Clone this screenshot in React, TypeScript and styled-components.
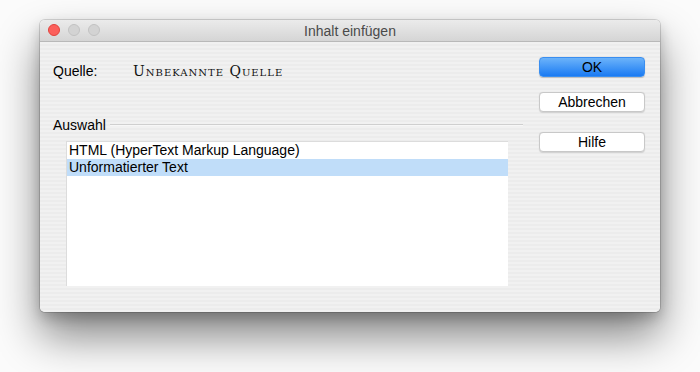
import React from "react";
import styled, { createGlobalStyle } from "styled-components";

const Global = createGlobalStyle`
  html, body { margin: 0; padding: 0; background: #ffffff; }
  body { font-family: "Liberation Sans", Arial, sans-serif; }
  * { box-sizing: border-box; }
`;

const Stage = styled.div`
  width: 700px;
  height: 372px;
  padding: 20px 40px 0 40px;
  background: #fbfbfb;
`;

const Window = styled.div`
  width: 620px;
  height: 292px;
  border-radius: 5px;
  overflow: hidden;
  display: flex;
  flex-direction: column;
  background: repeating-linear-gradient(
    to bottom,
    #ececec 0px,
    #ececec 2px,
    #f1f1f1 2px,
    #f1f1f1 4px
  );
  box-shadow: 0 0 0 1px rgba(0, 0, 0, 0.14), 0 24px 44px rgba(0, 0, 0, 0.48),
    0 6px 14px rgba(0, 0, 0, 0.2);
`;

const TitleBar = styled.div`
  height: 22px;
  flex: none;
  position: relative;
  display: flex;
  align-items: center;
  justify-content: center;
  background: linear-gradient(to bottom, #ebebeb, #d5d5d5);
  border-bottom: 1px solid #b9b9b9;
`;

const Lights = styled.div`
  position: absolute;
  left: 8px;
  top: 4px;
  display: flex;
  gap: 8px;
`;

const Light = styled.span<{ $color: string; $border: string }>`
  width: 12px;
  height: 12px;
  border-radius: 50%;
  background: ${(p) => p.$color};
  border: 1px solid ${(p) => p.$border};
`;

const Title = styled.div`
  font-family: "Liberation Sans", Arial, sans-serif;
  font-size: 14px;
  color: #4a4a4a;
  line-height: 16px;
  margin-top: 1px;
`;

const Content = styled.div`
  flex: 1;
  display: grid;
  grid-template-columns: 470px 106px;
  column-gap: 16px;
  padding: 15px 15px 0 13px;
`;

const LeftCol = styled.div`
  display: flex;
  flex-direction: column;
`;

const SourceRow = styled.div`
  display: flex;
  margin-top: 6px;
  line-height: 16px;
  font-size: 14px;
  color: #000;
`;

const SourceLabel = styled.span`
  width: 80px;
`;

const SourceValue = styled.span`
  font-family: "DejaVu Serif", "Liberation Serif", serif;
  font-variant: small-caps;
  font-size: 14px;
  letter-spacing: 1px;
  color: #111;
`;

const GroupHeader = styled.div`
  display: flex;
  align-items: center;
  margin-top: 38px;
  line-height: 16px;
  font-size: 14px;
  color: #000;
`;

const GroupLine = styled.div`
  flex: 1;
  height: 2px;
  margin-left: 4px;
  border-top: 1px solid #cfcfcf;
  border-bottom: 1px solid #f7f7f7;
`;

const List = styled.div`
  margin: 8px 0 0 13px;
  width: 442px;
  height: 145px;
  background: #ffffff;
  border-top: 1px solid #dcdcdc;
  border-left: 1px solid #dcdcdc;
`;

const Row = styled.div<{ $selected?: boolean }>`
  height: 17px;
  line-height: 17px;
  padding-left: 2px;
  font-size: 14px;
  color: #000;
  background: ${(p) => (p.$selected ? "#c0ddf9" : "transparent")};
`;

const RightCol = styled.div`
  display: flex;
  flex-direction: column;
`;

const Button = styled.button<{ $primary?: boolean; $gap?: number }>`
  width: 106px;
  height: 20px;
  margin-top: ${(p) => p.$gap ?? 0}px;
  padding: 0;
  font-family: "Liberation Sans", Arial, sans-serif;
  font-size: 14px;
  line-height: 18px;
  color: #000;
  border-radius: 4px;
  ${(p) =>
    p.$primary
      ? `
    background: linear-gradient(to bottom, #6cb3fa, #1b7bf3);
    border: 1px solid #3a8ef0;
    box-shadow: 0 0.5px 1px rgba(0,0,0,0.2);
  `
      : `
    background: #ffffff;
    border: 1px solid #c8c8c8;
    box-shadow: 0 0.5px 1px rgba(0,0,0,0.12);
  `}
`;

export default function App() {
  return (
    <>
      <Global />
      <Stage>
        <Window>
          <TitleBar>
            <Lights>
              <Light $color="#fc605c" $border="#e0443e" />
              <Light $color="#d3d3d3" $border="#c2c2c2" />
              <Light $color="#d3d3d3" $border="#c2c2c2" />
            </Lights>
            <Title>Inhalt einfügen</Title>
          </TitleBar>
          <Content>
            <LeftCol>
              <SourceRow>
                <SourceLabel>Quelle:</SourceLabel>
                <SourceValue>Unbekannte Quelle</SourceValue>
              </SourceRow>
              <GroupHeader>
                Auswahl
                <GroupLine />
              </GroupHeader>
              <List>
                <Row>HTML (HyperText Markup Language)</Row>
                <Row $selected>Unformatierter Text</Row>
              </List>
            </LeftCol>
            <RightCol>
              <Button $primary>OK</Button>
              <Button $gap={15}>Abbrechen</Button>
              <Button $gap={20}>Hilfe</Button>
            </RightCol>
          </Content>
        </Window>
      </Stage>
    </>
  );
}
